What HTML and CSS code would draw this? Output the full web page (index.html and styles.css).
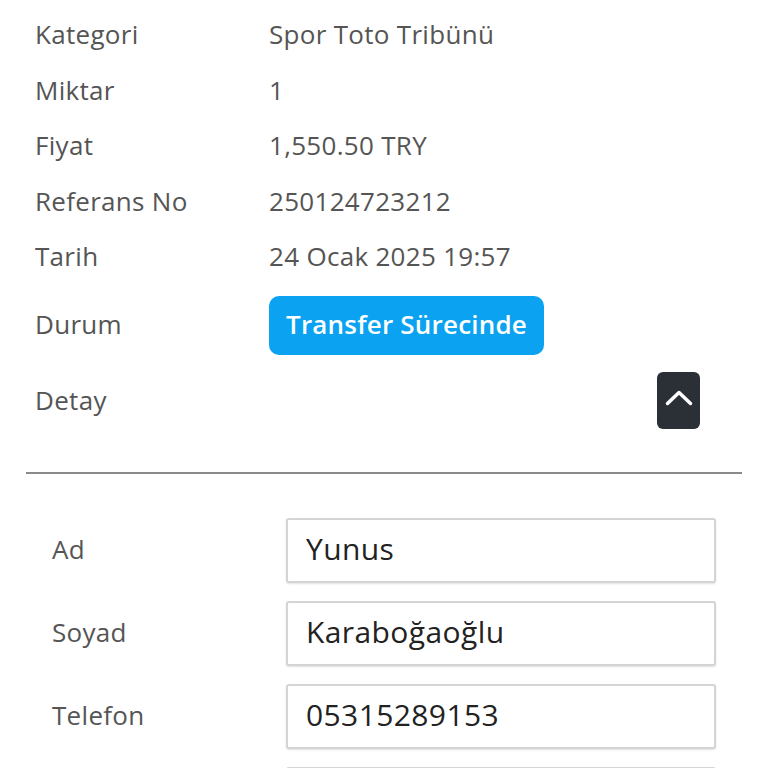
FILE: index.html
```html
<!DOCTYPE html>
<html lang="tr">
<head>
<meta charset="utf-8">
<link rel="stylesheet" href="styles.css">
</head>
<body>
<div class="page">
  <div class="info">
    <div class="row"><span class="label">Kategori</span><span class="value">Spor Toto Tribünü</span></div>
    <div class="row"><span class="label">Miktar</span><span class="value">1</span></div>
    <div class="row"><span class="label">Fiyat</span><span class="value">1,550.50 TRY</span></div>
    <div class="row"><span class="label">Referans No</span><span class="value">250124723212</span></div>
    <div class="row"><span class="label">Tarih</span><span class="value">24 Ocak 2025 19:57</span></div>
    <div class="row row-status"><span class="label">Durum</span><span class="badge">Transfer Sürecinde</span></div>
    <div class="row row-detail"><span class="label">Detay</span>
      <button class="toggle" type="button" aria-label="Kapat">
        <svg viewBox="0 0 28 16" width="28" height="16"><path d="M2.5 13.5 L14 2.5 L25.5 13.5" fill="none" stroke="#fff" stroke-width="3.5" stroke-linecap="round" stroke-linejoin="round"/></svg>
      </button>
    </div>
  </div>
  <hr class="divider">
  <form class="form">
    <div class="field"><label class="flabel">Ad</label><input class="input" type="text" value="Yunus"></div>
    <div class="field"><label class="flabel">Soyad</label><input class="input" type="text" value="Karaboğaoğlu"></div>
    <div class="field"><label class="flabel">Telefon</label><input class="input" type="text" value="05315289153"></div>
    <div class="field"><span class="flabel"></span><input class="input" type="text" value=""></div>
  </form>
</div>
</body>
</html>
```
FILE: styles.css
```css
html, body {
  margin: 0;
  padding: 0;
  background: #fff;
  overflow: hidden;
}
body {
  font-family: "Open Sans", "Noto Sans", sans-serif;
  color: #555;
}
.page {
  padding: 8px 26px 0 26px;
}
.info {
  padding-left: 9px;
  padding-right: 42px;
}
.row {
  display: flex;
  align-items: center;
  height: 55.5px;
}
.label {
  width: 234px;
  flex: none;
  font-size: 26px;
  letter-spacing: 0.3px;
  color: #555;
  padding-bottom: 3px;
}
.value {
  font-size: 26px;
  letter-spacing: 0.3px;
  color: #555;
  padding-bottom: 3px;
}
.row-status {
  height: auto;
  padding: 10px 0 18px;
}
.badge {
  display: inline-flex;
  align-items: center;
  height: 59px;
  padding: 0 17px 3px;
  box-sizing: border-box;
  background: #0ba2f1;
  color: #fff;
  border-radius: 10px;
  font-size: 26px;
  font-weight: 600;
  letter-spacing: 0.2px;
}
.row-detail {
  height: 57px;
  justify-content: space-between;
}
.toggle {
  width: 43px;
  height: 57px;
  border: none;
  border-radius: 6px;
  background: #2b3036;
  display: flex;
  align-items: center;
  justify-content: center;
  padding: 0;
  margin-bottom: 1px;
}
.toggle svg {
  display: block;
  margin-top: -5px;
}
.divider {
  margin: 42px 0 0 0;
  border: none;
  border-top: 2px solid #8a8a8a;
  height: 0;
}
.form {
  padding: 44px 26px 0 26px;
  display: flex;
  flex-direction: column;
  gap: 18px;
}
.field {
  display: flex;
  align-items: center;
}
.flabel {
  width: 234px;
  flex: none;
  font-size: 26px;
  letter-spacing: 0.3px;
  color: #555;
  padding-bottom: 3px;
}
.input {
  width: 430px;
  height: 65px;
  box-sizing: border-box;
  border: 2px solid #d4d4d4;
  border-radius: 3px;
  box-shadow: 0 1px 2px rgba(0,0,0,0.12);
  padding: 0 18px 3px;
  font-family: "Open Sans", "Noto Sans", sans-serif;
  font-size: 30px;
  letter-spacing: 0.4px;
  color: #222;
  background: #fff;
}
```
